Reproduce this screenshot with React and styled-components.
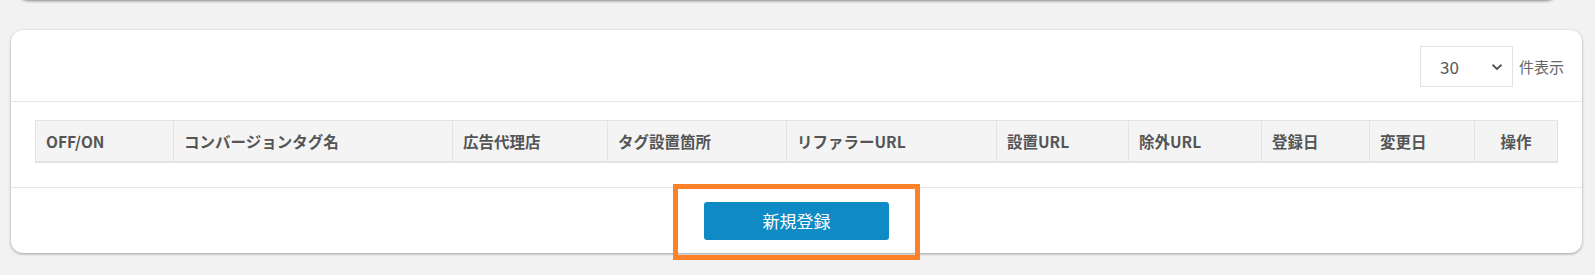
import styled, { createGlobalStyle } from "styled-components";

const columns = [
  { label: "OFF/ON", width: 138 },
  { label: "コンバージョンタグ名", width: 279 },
  { label: "広告代理店", width: 155 },
  { label: "タグ設置箇所", width: 179 },
  { label: "リファラーURL", width: 210 },
  { label: "設置URL", width: 132 },
  { label: "除外URL", width: 133 },
  { label: "登録日", width: 108 },
  { label: "変更日", width: 105 },
  { label: "操作", width: 83, center: true },
];

function App() {
  return (
    <>
      <GlobalStyle />
      <Page>
        <PrevCard />
        <Card>
          <CardHeader>
            <PerPage>
              <SelectBox>
                <span>30</span>
                <svg width="12" height="8" viewBox="0 0 12 8">
                  <path
                    d="M1.5 1.8 L6 6 L10.5 1.8"
                    fill="none"
                    stroke="#555"
                    strokeWidth="2"
                  />
                </svg>
              </SelectBox>
              <PerPageLabel>件表示</PerPageLabel>
            </PerPage>
          </CardHeader>

          <TableArea>
            <Table>
              <colgroup>
                {columns.map((c) => (
                  <col key={c.label} style={{ width: c.width }} />
                ))}
              </colgroup>
              <thead>
                <tr>
                  {columns.map((c) => (
                    <Th key={c.label} $center={c.center}>
                      {c.label}
                    </Th>
                  ))}
                </tr>
              </thead>
            </Table>
          </TableArea>

          <CardFooter>
            <Highlight>
              <PrimaryBtn>新規登録</PrimaryBtn>
            </Highlight>
          </CardFooter>
        </Card>
      </Page>
    </>
  );
}

export default App;

const GlobalStyle = createGlobalStyle`
  body {
    margin: 0;
    background: #f2f2f2;
    font-family: "Noto Sans CJK JP", "Noto Sans", sans-serif;
  }
`;

const Page = styled.div`
  height: 275px;
  overflow: hidden;
  padding: 0 13px 0 11px;
`;

const PrevCard = styled.div`
  height: 20px;
  margin: -20px 25px 30px 7px;
  background: #fff;
  border-radius: 0 0 10px 10px;
  box-shadow: 0 1px 3px rgba(0, 0, 0, 0.45);
`;

const Card = styled.div`
  background: #fff;
  border-radius: 12px;
  box-shadow: 0 1px 3px rgba(0, 0, 0, 0.35);
`;

const CardHeader = styled.div`
  height: 71px;
  border-bottom: 1px solid #e6e6e6;
  display: flex;
  align-items: center;
  justify-content: flex-end;
  padding: 0 18px 0 24px;
`;

const PerPage = styled.div`
  display: flex;
  align-items: center;
  gap: 6px;
  margin-top: 2px;
`;

const SelectBox = styled.div`
  width: 93px;
  height: 41px;
  box-sizing: border-box;
  border: 1px solid #e3e3e3;
  display: flex;
  align-items: center;
  justify-content: space-between;
  padding: 0 9px 0 19px;
  font-size: 17px;
  color: #555;
`;

const PerPageLabel = styled.span`
  font-size: 15px;
  color: #666;
`;

const TableArea = styled.div`
  padding: 18px 25px 24px 24px;
  border-bottom: 1px solid #e6e6e6;
`;

const Table = styled.table`
  width: 100%;
  border-collapse: collapse;
  table-layout: fixed;
`;

const Th = styled.th`
  height: 41px;
  box-sizing: border-box;
  background: #f4f4f4;
  border: 1px solid #e3e3e3;
  border-bottom-width: 2px;
  padding: 0 10px;
  text-align: ${({ $center }) => ($center ? "center" : "left")};
  font-size: 15.5px;
  font-weight: 700;
  color: #555;
  white-space: nowrap;
`;

const CardFooter = styled.div`
  display: flex;
  justify-content: center;
  height: 65px;
`;

const Highlight = styled.div`
  position: relative;
  z-index: 1;
  margin-top: -4px;
  height: 76px;
  width: 247px;
  box-sizing: border-box;
  border: 5px solid #fd8128;
  display: flex;
  justify-content: center;
  padding-top: 13px;
`;

const PrimaryBtn = styled.button`
  width: 185px;
  height: 38px;
  border: none;
  border-radius: 3px;
  background: #0e8ac4;
  color: #fff;
  font-family: "Noto Sans CJK JP", sans-serif;
  font-size: 17px;
  cursor: pointer;
`;
